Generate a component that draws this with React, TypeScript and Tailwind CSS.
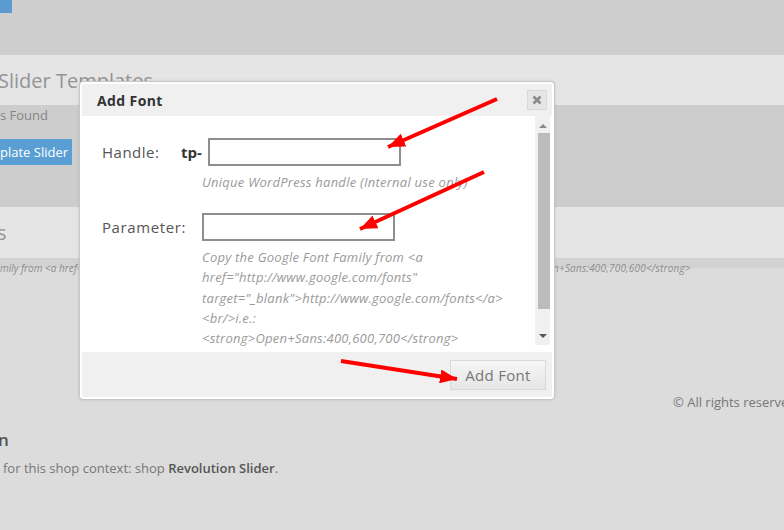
export default function App() {
  const helpLines = [
    'Copy the Google Font Family from <a',
    'href="http://www.google.com/fonts"',
    'target="_blank">http://www.google.com/fonts</a>',
    '<br/>i.e.:',
    '<strong>Open+Sans:400,600,700</strong>',
  ];

  return (
    <div className="relative w-[784px] h-[530px] overflow-hidden bg-[#dcdcdc] font-['Open_Sans',sans-serif]">
      {/* page behind the overlay */}
      <div className="h-[55px] bg-[#cecece]">
        <div className="w-[12px] h-[13px] bg-[#5b9bd0]" />
      </div>
      <div className="h-[50px] bg-[#e5e5e5] flex items-center">
        <span className="text-[20px] leading-[26px] text-[#949494] whitespace-nowrap -ml-[2px] mt-[2px]">Slider Templates</span>
      </div>
      <div className="h-[102px] bg-[#cdcdcd] pt-[1px]">
        <div className="text-[13px] leading-[18px] text-[#858585]">s Found</div>
        <div className="mt-[15px] w-[72px] h-[26px] bg-[#5a9fd4] text-white text-[13px] leading-[26px] whitespace-nowrap overflow-hidden text-right pr-[8px]">
          plate Slider
        </div>
      </div>
      <div className="h-[51px] bg-[#e5e5e5] flex items-center">
        <span className="text-[20px] leading-[26px] text-[#949494] -ml-[3px]">s</span>
      </div>
      <div className="h-[10px] bg-[#d2d2d2]" />
      <div className="-mt-[7px] h-[14px] flex text-[10px] leading-[14px] italic text-[#8c8c8c] whitespace-nowrap">
        <span className="w-[553px] shrink-0 overflow-hidden">mily from &lt;a href="http://www.google.com/fonts"</span>
        <span className="tracking-[0.2px]">n+Sans:400,700,600&lt;/strong&gt;</span>
      </div>
      <div className="mt-[118px] pl-[673px] text-[13px] leading-[18px] text-[#777] whitespace-nowrap">© All rights reserved</div>
      <div className="mt-[18px] text-[17px] leading-[22px] font-semibold text-[#555] -ml-[2px]">n</div>
      <div className="mt-[8px] pl-[3px] text-[13px] leading-[18px] text-[#777]">
        for this shop context: shop <span className="font-semibold text-[#555]">Revolution Slider</span>.
      </div>

      {/* dialog */}
      <div className="absolute left-[79px] top-[81px] w-[476px] h-[319px] border border-[#c6c6c6] rounded-[4px] bg-white p-[2px] flex flex-col shadow-[0_0_3px_rgba(0,0,0,0.12)]">
        <div className="h-[32px] bg-[#f0f0f0] flex items-center justify-between pl-[15px] pr-[5px] rounded-t-[2px]">
          <span className="text-[14px] font-bold text-[#333] tracking-[0.4px]">Add Font</span>
          <button className="w-[20px] h-[20px] bg-[#e6e6e6] border border-[#dadada] flex items-center justify-center">
            <svg width="10" height="10" viewBox="0 0 10 10">
              <path d="M1.5 1.5 L8.5 8.5 M8.5 1.5 L1.5 8.5" stroke="#8a8a8a" strokeWidth="2.6" />
            </svg>
          </button>
        </div>
        <div className="h-[236px] flex">
          <div className="flex-1 pt-[22px] text-[#555]">
            <div className="flex items-center h-[28px]">
              <span className="ml-[20px] w-[79px] text-[15px] tracking-[0.5px]">Handle:</span>
              <span className="w-[27px] text-[15px] font-bold text-[#333]">tp-</span>
              <div className="w-[193px] h-[28px] border-2 border-[#8e8e8e] bg-white" />
            </div>
            <div className="mt-[6px] ml-[120px] text-[13px] leading-[20px] italic text-[#9a9a9a] whitespace-nowrap tracking-[0.25px]">
              Unique WordPress handle (Internal use only)
            </div>
            <div className="mt-[21px] flex items-center h-[28px]">
              <span className="ml-[20px] w-[100px] text-[15px] tracking-[0.6px]">Parameter:</span>
              <div className="w-[193px] h-[28px] border-2 border-[#8e8e8e] bg-white" />
            </div>
            <div className="mt-[6px] ml-[120px] text-[13px] leading-[20.25px] italic text-[#9a9a9a] whitespace-nowrap tracking-[0.25px]">
              {helpLines.map((l) => (
                <div key={l}>{l}</div>
              ))}
            </div>
          </div>
          <div className="w-[15px] h-[229px] mr-[2px] bg-[#f0f0f0] flex flex-col items-center">
            <div className="h-[17px] flex items-center justify-center pt-[2px]">
              <div className="w-0 h-0 border-l-[4px] border-r-[4px] border-b-[4px] border-l-transparent border-r-transparent border-b-[#8a8a8a]" />
            </div>
            <div className="w-[12px] ml-[2px] h-[176px] bg-[#bcbcbc]" />
            <div className="flex-1 flex items-end justify-center pb-[7px]">
              <div className="w-0 h-0 border-l-[4px] border-r-[4px] border-t-[4px] border-l-transparent border-r-transparent border-t-[#555]" />
            </div>
          </div>
        </div>
        <div className="flex-1 bg-[#f0f0f0] flex justify-end items-start pt-[8px] pr-[6px] rounded-b-[2px]">
          <button className="w-[96px] h-[30px] border border-[#d9d9d9] bg-gradient-to-b from-[#f6f6f6] to-[#e6e6e6] text-[15px] text-[#777] tracking-[0.3px]">
            Add Font
          </button>
        </div>
      </div>

      {/* annotation arrows */}
      <svg className="absolute inset-0 pointer-events-none" width="784" height="530" viewBox="0 0 784 530">
        <defs>
          <marker id="head" markerUnits="userSpaceOnUse" markerWidth="18" markerHeight="14" refX="17" refY="7" orient="auto">
            <path d="M0 0 L17 7 L0 14 Z" fill="#ff0000" />
          </marker>
        </defs>
        <line x1="497" y1="99" x2="388" y2="147" stroke="#ff0000" strokeWidth="4" markerEnd="url(#head)" />
        <line x1="484" y1="172" x2="360" y2="229" stroke="#ff0000" strokeWidth="4" markerEnd="url(#head)" />
        <line x1="341" y1="361" x2="457" y2="379" stroke="#ff0000" strokeWidth="4" markerEnd="url(#head)" />
      </svg>
    </div>
  );
}
